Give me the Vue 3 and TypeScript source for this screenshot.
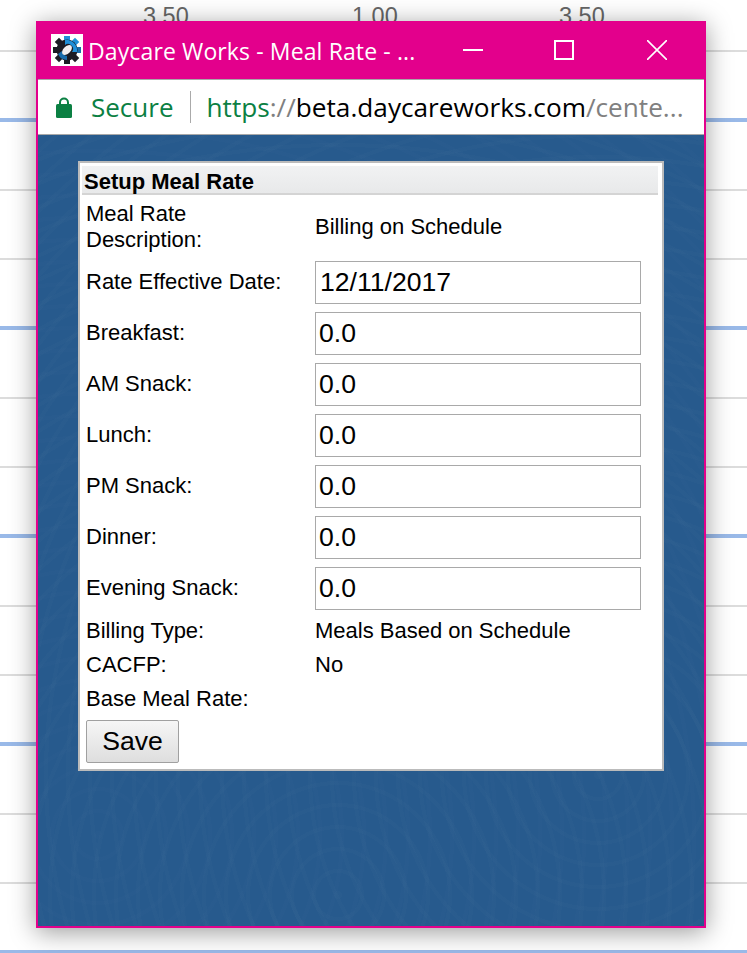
<template>
  <div class="page">
    <div class="axis">
      <span>3.50</span>
      <span>1.00</span>
      <span>3.50</span>
    </div>
    <div class="popup">
      <div class="titlebar">
        <svg class="logo" viewBox="0 0 32 32">
          <rect width="32" height="32" fill="#fff" />
          <g fill="#1c1c24">
            <rect x="13" y="2" width="6" height="6" fill="#1f8fd8" />
            <rect x="13" y="24" width="6" height="6" />
            <rect x="2" y="13" width="6" height="6" />
            <rect x="24" y="13" width="6" height="6" fill="#1a6cab" />
            <rect x="5" y="5" width="6" height="6" transform="rotate(45 8 8)" />
            <rect x="21" y="5" width="6" height="6" fill="#1f8fd8" transform="rotate(45 24 8)" />
            <rect x="5" y="21" width="6" height="6" transform="rotate(45 8 24)" />
            <rect x="21" y="21" width="6" height="6" transform="rotate(45 24 24)" />
          </g>
          <circle cx="16" cy="16" r="10.5" fill="#1c1c24" />
          <path d="M14 6a10.5 10.5 0 0 1 12 12l-5 0a5 5 0 0 0-7-7z" fill="#1f8fd8" />
          <path d="M7 20a10 10 0 0 0 9 6l0-4a5 5 0 0 1-5-5z" fill="#1a6cab" />
          <ellipse cx="16" cy="16" rx="6" ry="3.6" fill="#f4f0f0" transform="rotate(-45 16 16)" />
        </svg>
        <span class="title">Daycare Works - Meal Rate - ...</span>
        <div class="controls">
          <svg viewBox="0 0 20 20" class="ctl"><path d="M0 10h20" /></svg>
          <svg viewBox="0 0 20 20" class="ctl"><rect x="1" y="1" width="18" height="18" /></svg>
          <svg viewBox="0 0 20 20" class="ctl close"><path d="M0 0l20 20M20 0L0 20" /></svg>
        </div>
      </div>
      <div class="addressbar">
        <svg class="lock" viewBox="0 0 16 21">
          <path d="M4 9V5.5a4 4 0 0 1 8 0V9" fill="none" stroke="#0b8043" stroke-width="2" />
          <rect x="0" y="7" width="16" height="14" rx="1.5" fill="#0b8043" />
        </svg>
        <span class="secure">Secure</span>
        <span class="divider"></span>
        <span class="url"><span class="scheme">https</span><span class="slashes">://</span>beta.daycareworks.com<span class="path">/cente...</span></span>
      </div>
      <div class="content">
        <div class="panel">
          <div class="heading">Setup Meal Rate</div>
          <div class="row desc">
            <label>Meal Rate Description:</label>
            <span>Billing on Schedule</span>
          </div>
          <div v-for="field in fields" :key="field.label" class="row field">
            <label>{{ field.label }}:</label>
            <input type="text" :value="field.value" :class="{ date: field.label === 'Rate Effective Date' }" />
          </div>
          <div v-for="item in info" :key="item.label" class="row info">
            <label>{{ item.label }}:</label>
            <span>{{ item.value }}</span>
          </div>
          <button class="save" type="button">Save</button>
        </div>
      </div>
    </div>
  </div>
</template>

<script setup lang="ts">
interface Pair {
  label: string
  value: string
}

const fields: Pair[] = [
  { label: 'Rate Effective Date', value: '12/11/2017' },
  { label: 'Breakfast', value: '0.0' },
  { label: 'AM Snack', value: '0.0' },
  { label: 'Lunch', value: '0.0' },
  { label: 'PM Snack', value: '0.0' },
  { label: 'Dinner', value: '0.0' },
  { label: 'Evening Snack', value: '0.0' }
]

const info: Pair[] = [
  { label: 'Billing Type', value: 'Meals Based on Schedule' },
  { label: 'CACFP', value: 'No' },
  { label: 'Base Meal Rate', value: '' }
]
</script>

<style>
html,
body {
  margin: 0;
  background: #fff;
}
</style>

<style scoped>
.page {
  position: relative;
  width: 747px;
  height: 953px;
  overflow: hidden;
  box-sizing: border-box;
  padding: 21px 0 0 36px;
  font-family: "Liberation Sans", Arial, sans-serif;
  background-color: #fff;
  background-image: repeating-linear-gradient(
    transparent 0 50px,
    #dcdcdc 50px 52px,
    transparent 52px 118px,
    #99b9e8 118px 122px,
    transparent 122px 189px,
    #dcdcdc 189px 191px,
    transparent 191px 208px
  );
}

.axis {
  position: absolute;
  top: 3px;
  left: 0;
  width: 747px;
  height: 30px;
  font-size: 23.5px;
  color: #666;
  line-height: 26px;
}

.axis span {
  position: absolute;
  top: 0;
}

.axis span:nth-child(1) {
  left: 143px;
}

.axis span:nth-child(2) {
  left: 352px;
}

.axis span:nth-child(3) {
  left: 559px;
}

.popup {
  position: relative;
  width: 670px;
  height: 907px;
  box-sizing: border-box;
  display: flex;
  flex-direction: column;
  border: 2px solid #e3008c;
  border-top: 0;
  background: #275a8d;
  box-shadow: 0 4px 24px rgba(0, 0, 0, 0.4);
}

.titlebar {
  height: 58px;
  flex: none;
  display: flex;
  align-items: center;
  background: #e3008c;
  color: #fff;
  padding-left: 14px;
  margin-left: -1px;
  margin-right: -1px;
  font-family: "Open Sans", "Noto Sans", sans-serif;
}

.logo {
  width: 32px;
  height: 32px;
  flex: none;
  filter: blur(0.5px);
}

.title {
  margin-left: 5px;
  font-size: 23px;
  letter-spacing: 0.12px;
  white-space: nowrap;
  flex: 1;
  padding-top: 2px;
}

.controls {
  display: flex;
  align-items: center;
  gap: 71px;
  padding-right: 38px;
}

.ctl {
  width: 20px;
  height: 20px;
  fill: none;
  stroke: #fff;
  stroke-width: 2;
  display: block;
}

.ctl.close {
  margin-left: 2px;
  stroke-width: 1.6;
}

.addressbar {
  flex: none;
  height: 54px;
  box-sizing: content-box;
  display: flex;
  align-items: center;
  background: #fff;
  border-top: 1px solid #a8a8a8;
  border-bottom: 1px solid #a8a8a8;
  padding-left: 18px;
  font-family: "Open Sans", "Noto Sans", sans-serif;
  font-size: 26.2px;
  white-space: nowrap;
}

.lock {
  width: 16px;
  height: 21px;
  flex: none;
}

.secure {
  margin-left: 19px;
  color: #0b8043;
  font-size: 26px;
}

.divider {
  width: 1px;
  height: 32px;
  background: #aaa;
  margin: 0 15px 0 17px;
}

.url {
  color: #000;
}

.scheme {
  color: #0b8043;
}

.slashes,
.path {
  color: #808080;
}

.content {
  flex: 1;
  padding: 26px 40px 0 40px;
  background-image:
    repeating-radial-gradient(circle at 560px 640px, rgba(255, 255, 255, 0.012) 0 4px, transparent 4px 22px),
    repeating-radial-gradient(circle at 300px 760px, rgba(255, 255, 255, 0.012) 0 4px, transparent 4px 22px),
    repeating-radial-gradient(circle at 60px 700px, rgba(255, 255, 255, 0.008) 0 4px, transparent 4px 22px);
}

.panel {
  width: 586px;
  height: 610px;
  box-sizing: border-box;
  background: #fff;
  border: 2px solid #bbb;
  padding: 3px 4px 0 2px;
  font-size: 22px;
  color: #000;
}

.heading {
  height: 29px;
  box-sizing: border-box;
  font-size: 22px;
  line-height: 31px;
  font-weight: bold;
  padding-left: 2px;
  background: linear-gradient(#f1f2f3, #e8e9ea);
  border-bottom: 2px solid #d4d4d4;
}

.row {
  display: grid;
  grid-template-columns: 229px 1fr;
  align-items: center;
  padding-left: 4px;
  line-height: 26px;
}

.desc {
  height: 62px;
  box-sizing: border-box;
  padding-top: 2px;
  padding-right: 100px;
}

.desc label {
  padding-right: 50px;
}

.field {
  height: 51px;
}

.field label {
  padding-bottom: 2px;
}

.info {
  height: 34px;
}

.row input {
  width: 326px;
  height: 43px;
  box-sizing: border-box;
  border: 1px solid #a9a9a9;
  padding: 0 3px;
  font-family: "Liberation Sans", Arial, sans-serif;
  font-size: 26.6px;
  color: #000;
  background: #fff;
  outline: none;
}

.row input.date {
  padding-left: 4px;
}

.save {
  display: block;
  margin: 4px 0 0 4px;
  width: 93px;
  height: 43px;
  border: 1px solid #a0a0a0;
  border-radius: 2px;
  background: linear-gradient(#f6f6f6, #dedede);
  font-family: "Liberation Sans", Arial, sans-serif;
  font-size: 26.6px;
  color: #000;
  padding: 0;
}
</style>
